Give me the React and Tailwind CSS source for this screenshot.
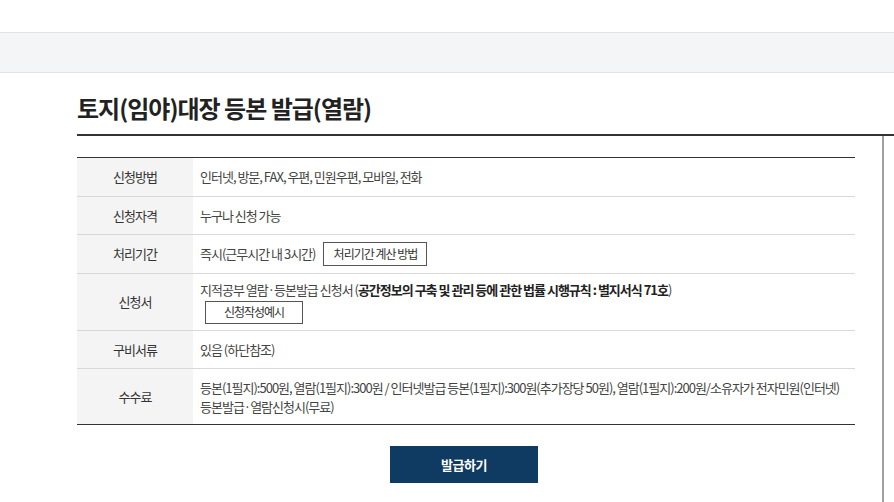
import React from "react";

const rows = [
  { label: "신청방법", h: "h-[39px]", body: <span>인터넷, 방문, FAX, 우편, 민원우편, 모바일, 전화</span> },
  { label: "신청자격", h: "h-[38px]", body: <span>누구나 신청 가능</span> },
  {
    label: "처리기간",
    h: "h-[39px]",
    body: (
      <div className="flex items-center gap-[8px]">
        <span>즉시(근무시간 내 3시간)</span>
        <button className="h-[24px] w-[104px] border border-[#555] bg-white text-[12px] text-[#333]">
          처리기간 계산 방법
        </button>
      </div>
    ),
  },
  {
    label: "신청서",
    h: "h-[57px]",
    body: (
      <div className="flex flex-col items-start">
        <span>
          지적공부 열람·등본발급 신청서 (
          <b className="font-bold text-[#222]">공간정보의 구축 및 관리 등에 관한 법률 시행규칙 : 별지서식 71호</b>)
        </span>
        <button className="ml-[5px] mt-[1px] h-[23px] w-[98px] border border-[#555] bg-white text-[12px] text-[#333]">
          신청작성예시
        </button>
      </div>
    ),
  },
  { label: "구비서류", h: "h-[38px]", body: <span>있음 (하단참조)</span> },
  {
    label: "수수료",
    h: "h-[55px]",
    body: (
      <div className="leading-[19px]">
        <div className="whitespace-nowrap">
          등본(1필지):500원, 열람(1필지):300원 / 인터넷발급 등본(1필지):300원(추가장당 50원), 열람(1필지):200원/소유자가 전자민원(인터넷)
        </div>
        <div>등본발급·열람신청시(무료)</div>
      </div>
    ),
  },
];

export default function App() {
  return (
    <div className="min-h-[502px] bg-white font-['Noto_Sans_CJK_KR','Noto_Sans',sans-serif] text-[#333]">
      {/* top strip */}
      <div className="h-[33px] border-b border-[#e3e3e3]" />
      <div className="h-[40px] border-b border-[#e3e3e3] bg-[#f4f5f7]" />

      {/* title */}
      <div className="pl-[77px] pt-[21px] pb-[12px]">
        <h1 className="text-[24px] font-bold leading-[28px] tracking-[-1px] text-[#222]">
          토지(임야)대장 등본 발급(열람)
        </h1>
      </div>
      <div className="ml-[77px] h-[2px] bg-[#333]" />

      <div className="flex">
        <div className="w-[882px] shrink-0 pl-[77px] pr-[27px] pt-[21px]">
          <div className="border-t border-b border-[#333] text-[13px] tracking-[-1px] text-[#444]">
            {rows.map((r, i) => (
              <div
                key={r.label}
                className={`flex ${r.h} ${i < rows.length - 1 ? "border-b border-[#d9d9d9]" : ""}`}
              >
                <div className="flex w-[116px] shrink-0 items-center justify-center bg-[#f4f4f4] text-[13px] text-[#333]">
                  {r.label}
                </div>
                <div className="flex items-center pl-[7px]">{r.body}</div>
              </div>
            ))}
          </div>

          <div className="flex justify-center pt-[21px] pr-[4px]">
            <button className="h-[37px] w-[148px] bg-[#0f3a62] text-[13px] font-bold tracking-[-0.5px] text-white">
              발급하기
            </button>
          </div>
        </div>
        <div className="min-h-[366px] flex-1 border-l-2 border-[#a0a0a0]" />
      </div>
    </div>
  );
}
